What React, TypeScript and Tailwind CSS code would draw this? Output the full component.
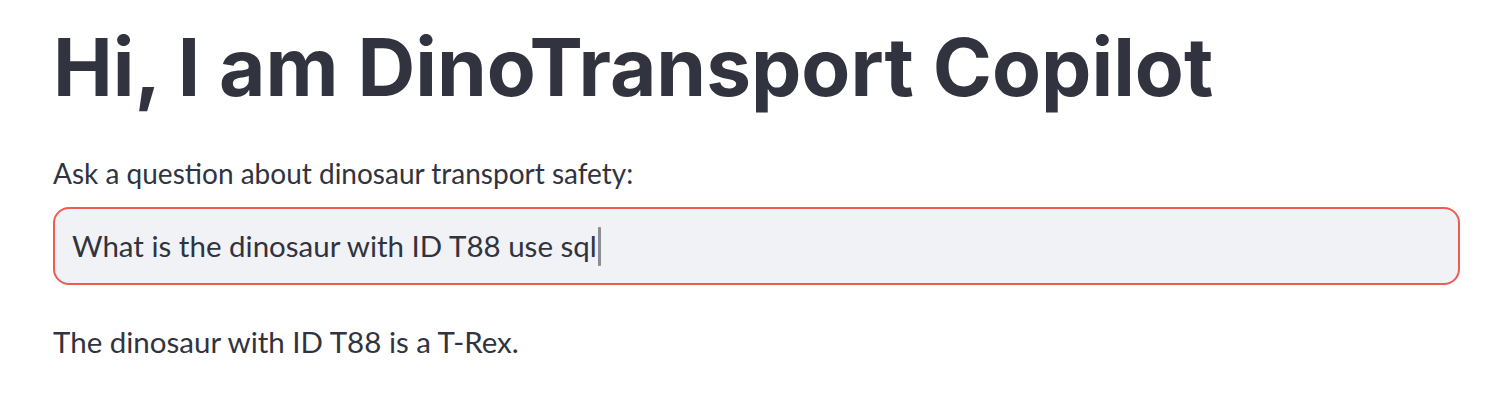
export default function App() {
  return (
    <div className="min-h-[412px] w-full bg-white pl-[53px] pr-[48px] pt-[17px] font-['Lato','Noto_Sans',sans-serif] text-[#31333f]">
      <h1 className="font-['Inter','Lato',sans-serif] text-[80px] font-bold leading-[100px]">Hi, I am DinoTransport Copilot</h1>

      <div className="mt-[39px] flex flex-col">
        <label className="text-[28px] leading-[34px]">Ask a question about dinosaur transport safety:</label>
        <div className="mt-[17px] flex h-[78px] items-center rounded-[16px] border-2 border-[#ef5a52] bg-[#f0f2f6] pl-[17px] pr-4">
          <span className="text-[29.5px] leading-[36px]">What is the dinosaur with ID T88 use sql</span>
          <span className="ml-[1px] h-[39px] w-[3px] rounded-[1px] bg-[#8b8d93]" />
        </div>
      </div>

      <p className="mt-[39px] text-[29.5px] leading-[36px]">The dinosaur with ID T88 is a T-Rex.</p>
    </div>
  );
}
